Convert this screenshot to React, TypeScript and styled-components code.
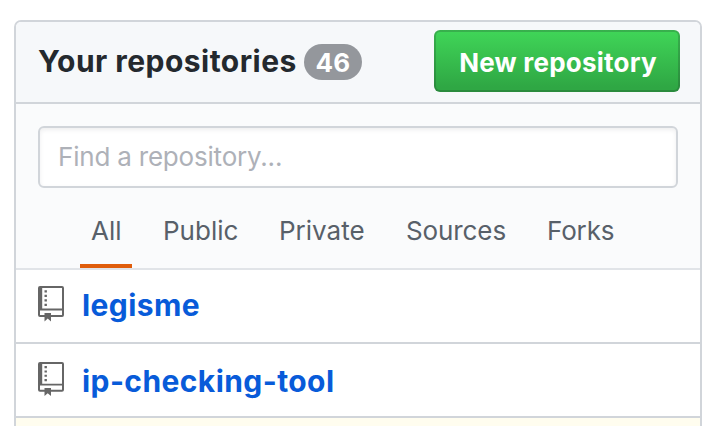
import React from 'react';
import styled, { createGlobalStyle } from 'styled-components';

const GlobalStyle = createGlobalStyle`
  *, *::before, *::after { box-sizing: border-box; }
  body {
    margin: 0;
    background: #fff;
    color: #24292e;
    font-family: Inter, "Liberation Sans", sans-serif;
    overflow: hidden;
  }
`;

const Viewport = styled.main`
  height: 426px;
  padding: 20px 0 0 14px;
  overflow: hidden;
`;

const Box = styled.section`
  height: 440px;
  border: 2px solid #d1d5da;
  border-radius: 7px;
  overflow: hidden;
`;

const Header = styled.header`
  display: flex;
  align-items: flex-start;
  height: 82px;
  padding: 8px 20px 0 22px;
  background: #f6f8fa;
  border-bottom: 2px solid #d1d5da;
`;

const Title = styled.h3`
  width: 266px;
  margin: 11px 0 0;
  font-size: 30px;
  font-weight: 650;
  line-height: 40px;
  letter-spacing: 0.46px;
  white-space: nowrap;
`;

const Counter = styled.span`
  width: 58px;
  height: 36px;
  margin-top: 14px;
  border-radius: 18px;
  background: #94979c;
  color: #fff;
  font-size: 26px;
  font-weight: 700;
  line-height: 37px;
  letter-spacing: 0.2px;
  text-align: center;
`;

const NewButton = styled.button`
  width: 246px;
  height: 62px;
  margin: 0 0 0 auto;
  padding: 3px 0 0 2px;
  border: 2px solid rgba(27, 31, 35, 0.2);
  border-radius: 6px;
  background: linear-gradient(-180deg, #40d658 0%, #2fa744 92%);
  background-origin: border-box;
  color: #fff;
  font: 700 26px/40px Inter, sans-serif;
  letter-spacing: 0.22px;
  white-space: nowrap;
`;

const Filters = styled.div`
  height: 166px;
  padding: 22px 22px 0;
  background: #fafbfc;
  border-bottom: 2px solid #e1e4e8;
`;

const SearchInput = styled.input`
  display: block;
  width: 640px;
  height: 62px;
  padding: 0 18px 2px;
  border: 2px solid #d1d5da;
  border-radius: 6px;
  background: #fff;
  box-shadow: inset 0 2px 4px rgba(27, 31, 35, 0.075);
  font: 400 26px/34px Inter, sans-serif;
  letter-spacing: -0.2px;
  outline: none;
  &::placeholder { color: #aeb1b8; opacity: 1; }
`;

const Tabs = styled.nav`
  display: flex;
  gap: 20px;
  height: 80px;
  margin-left: 42px;
`;

const Tab = styled.a<{ $active?: boolean; $width: number; $spacing: number }>`
  width: ${({ $width }) => $width}px;
  padding: 23px 0 0 11px;
  border-bottom: 4px solid ${({ $active }) => ($active ? '#e05d0b' : 'transparent')};
  color: #586069;
  font-size: 26px;
  line-height: 40px;
  letter-spacing: ${({ $spacing }) => $spacing}px;
  white-space: nowrap;
`;

const List = styled.ul`
  margin: 0;
  padding: 0;
  list-style: none;
`;

const Row = styled.li<{ $highlighted?: boolean }>`
  display: flex;
  align-items: flex-start;
  height: 74px;
  padding: 16px 22px 0;
  border-bottom: 2px solid #d1d5da;
  background: ${({ $highlighted }) => ($highlighted ? '#fffdef' : '#fff')};
`;

const RowIcon = styled.svg<{ $lift: number; $height: number }>`
  flex: none;
  width: 26px;
  height: ${({ $height }) => $height}px;
  margin: ${({ $lift }) => $lift}px 18px 0 0;
  fill: #666;
`;

const RepoLink = styled.a<{ $top: number }>`
  margin-top: ${({ $top }) => $top}px;
  color: #085bd9;
  font-size: 30px;
  font-weight: 650;
  line-height: 40px;
  letter-spacing: 0.42px;
  white-space: nowrap;
`;

const tabs = [
  { label: 'All', width: 52, spacing: 0 },
  { label: 'Public', width: 96, spacing: 0 },
  { label: 'Private', width: 107, spacing: 0 },
  { label: 'Sources', width: 121, spacing: -0.1 },
  { label: 'Forks', width: 90, spacing: -0.15 },
];

const repositories = [
  { name: 'legisme', top: -1, lift: 0, iconHeight: 36 },
  { name: 'ip-checking-tool', top: 1, lift: 2, iconHeight: 34.5 },
];

const RepoIcon = ({ lift, height }: { lift: number; height: number }) => (
  <RowIcon $lift={lift} $height={height} viewBox="0 0 26 36" preserveAspectRatio="none" aria-hidden="true">
    <path
      fillRule="evenodd"
      d="M2 0h22a2 2 0 0 1 2 2v27a2 2 0 0 1-2 2H13v4.6l-3.3-3-3.2 3V31H2a2 2 0 0 1-2-2V2a2 2 0 0 1 2-2zM4.2 2v20.6H24V2zM2 24.5V29h4.5v-2H13v2h11v-4.5z"
    />
    <path d="M6.5 4.3h2.4v2.2H6.5zM6.5 8.8h2.4V11H6.5zM6.5 13.2h2.4v2.2H6.5zM6.5 17.8h2.4V20H6.5z" />
  </RowIcon>
);

export default function App() {
  return (
    <>
      <GlobalStyle />
      <Viewport>
        <Box>
          <Header>
            <Title>Your repositories</Title>
            <Counter>46</Counter>
            <NewButton type="button">New repository</NewButton>
          </Header>
          <Filters>
            <SearchInput type="text" placeholder="Find a repository..." />
            <Tabs>
              {tabs.map(({ label, width, spacing }, i) => (
                <Tab key={label} $active={i === 0} $width={width} $spacing={spacing}>
                  {label}
                </Tab>
              ))}
            </Tabs>
          </Filters>
          <List>
            {repositories.map(({ name, top, lift, iconHeight }) => (
              <Row key={name}>
                <RepoIcon lift={lift} height={iconHeight} />
                <RepoLink $top={top}>{name}</RepoLink>
              </Row>
            ))}
            <Row $highlighted />
          </List>
        </Box>
      </Viewport>
    </>
  );
}
